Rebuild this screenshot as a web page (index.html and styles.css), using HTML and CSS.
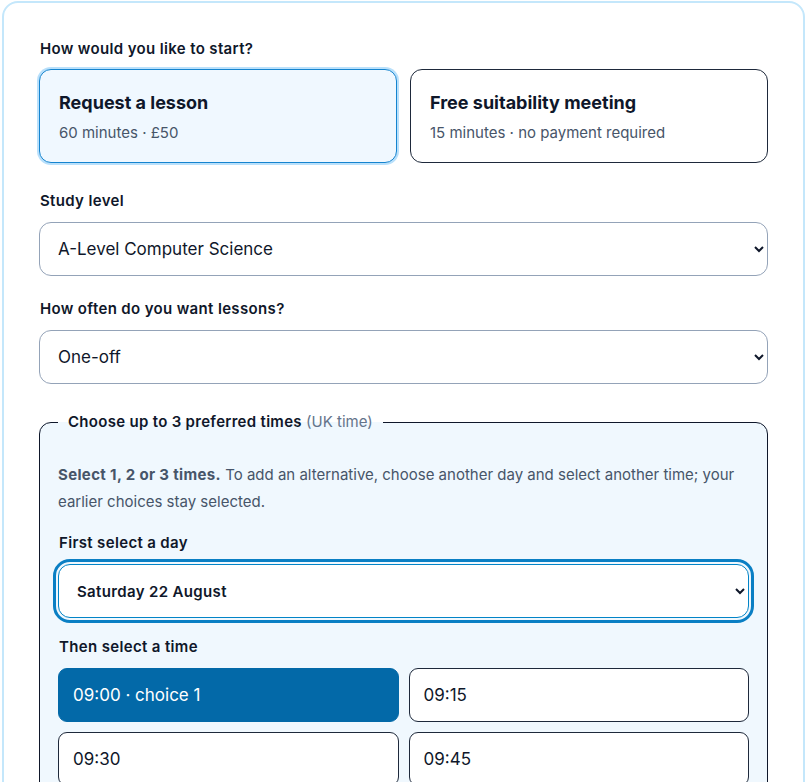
FILE: index.html
```html
<!DOCTYPE html>
<html lang="en">
<head>
<meta charset="utf-8">
<title>Book a lesson</title>
<link rel="stylesheet" href="styles.css">
</head>
<body>
<form class="card">
  <p class="label">How would you like to start?</p>
  <div class="options">
    <button type="button" class="option option-selected">
      <span class="option-title">Request a lesson</span>
      <span class="option-sub">60 minutes · £50</span>
    </button>
    <button type="button" class="option">
      <span class="option-title">Free suitability meeting</span>
      <span class="option-sub">15 minutes · no payment required</span>
    </button>
  </div>

  <label class="label label-study" for="level">Study level</label>
  <select id="level" class="select">
    <option>A-Level Computer Science</option>
    <option>GCSE Computer Science</option>
  </select>

  <label class="label label-often" for="often">How often do you want lessons?</label>
  <select id="often" class="select">
    <option>One-off</option>
    <option>Weekly</option>
  </select>

  <fieldset class="times">
    <legend class="legend"><span class="legend-main">Choose up to 3 preferred times</span> <span class="legend-note">(UK time)</span></legend>
    <p class="help"><strong>Select 1, 2 or 3 times.</strong> To add an alternative, choose another day and select another time; your earlier choices stay selected.</p>
    <label class="label label-day" for="day">First select a day</label>
    <select id="day" class="select select-day">
      <option>Saturday 22 August</option>
      <option>Sunday 23 August</option>
    </select>
    <p class="label label-time">Then select a time</p>
    <div class="slots">
      <button type="button" class="slot slot-selected">09:00 · choice 1</button>
      <button type="button" class="slot">09:15</button>
      <button type="button" class="slot">09:30</button>
      <button type="button" class="slot">09:45</button>
      <button type="button" class="slot">10:00</button>
      <button type="button" class="slot">10:15</button>
    </div>
  </fieldset>
</form>
</body>
</html>
```

FILE: styles.css
```css
html, body {
  margin: 0;
  padding: 0;
  background: #ffffff;
}

body {
  font-family: Inter, "Noto Sans", "Liberation Sans", sans-serif;
  color: #0f172a;
}

.card {
  display: block;
  margin: 1px 0 0 2px;
  border: 2px solid #c4e7fb;
  border-radius: 16px;
  padding: 36px 35px 40px 35px;
  background: #ffffff;
}

.label {
  display: block;
  margin: 0 0 11px 1px;
  font-size: 15px;
  line-height: 20px;
  font-weight: 600;
  letter-spacing: 0.35px;
  color: #0f172a;
}

.options {
  display: grid;
  grid-template-columns: 1fr 1fr;
  column-gap: 13px;
  margin-top: -1px;
}

.option {
  display: flex;
  flex-direction: column;
  align-items: flex-start;
  gap: 8px;
  margin: 0;
  padding: 21px 19px 19px;
  border: 1px solid #1e293b;
  border-radius: 12px;
  background: #ffffff;
  font-family: inherit;
  text-align: left;
  cursor: pointer;
}

.option-selected {
  border-color: #1584cf;
  background: #f0f8ff;
  box-shadow: 0 0 0 2px #b9e0fb;
}

.option-title {
  font-size: 18px;
  line-height: 24px;
  font-weight: 700;
  color: #0f172a;
}

.option-sub {
  font-size: 15px;
  line-height: 20px;
  color: #475569;
}

.label-study {
  margin-top: 28px;
}

.label-often {
  margin-top: 23px;
}

.select {
  display: block;
  width: 100%;
  height: 54px;
  margin: 0;
  padding: 0 12px 0 14px;
  border: 1px solid #94a3b8;
  border-radius: 12px;
  background-color: #ffffff;
  font-family: inherit;
  font-size: 17px;
  color: #0f172a;
}

.times {
  margin: 28px 0 0;
  padding: 29px 18px 24px;
  border: 1px solid #0f172a;
  border-radius: 12px;
  background: #f0f8fe;
  min-width: 0;
}

.legend {
  padding: 0 10px;
  font-size: 15px;
  line-height: 20px;
  color: #0f172a;
}

.legend-main {
  font-weight: 600;
  letter-spacing: 0.3px;
}

.legend-note {
  font-weight: 400;
  color: #64748b;
}

.help {
  margin: 0 0 18px;
  font-size: 15px;
  line-height: 27px;
  color: #475569;
}

.help strong {
  font-weight: 700;
  letter-spacing: 0.35px;
  color: #475569;
}

.select-day {
  font-size: 15px;
  font-weight: 600;
  letter-spacing: 0.35px;
  border-color: #0284c7;
  outline: 3px solid #0a7fc4;
  outline-offset: 2px;
}

.label-time {
  margin-top: 19px;
}

.slots {
  display: grid;
  grid-template-columns: 1fr 1fr;
  gap: 10px;
}

.slot {
  height: 54px;
  margin: 0;
  padding: 0 14px;
  border: 1px solid #1e293b;
  border-radius: 9px;
  background: #ffffff;
  font-family: inherit;
  font-size: 17px;
  color: #0f172a;
  text-align: left;
  cursor: pointer;
}

.slot-selected {
  background: #0369a8;
  border-color: #0369a8;
  color: #ffffff;
}
```
